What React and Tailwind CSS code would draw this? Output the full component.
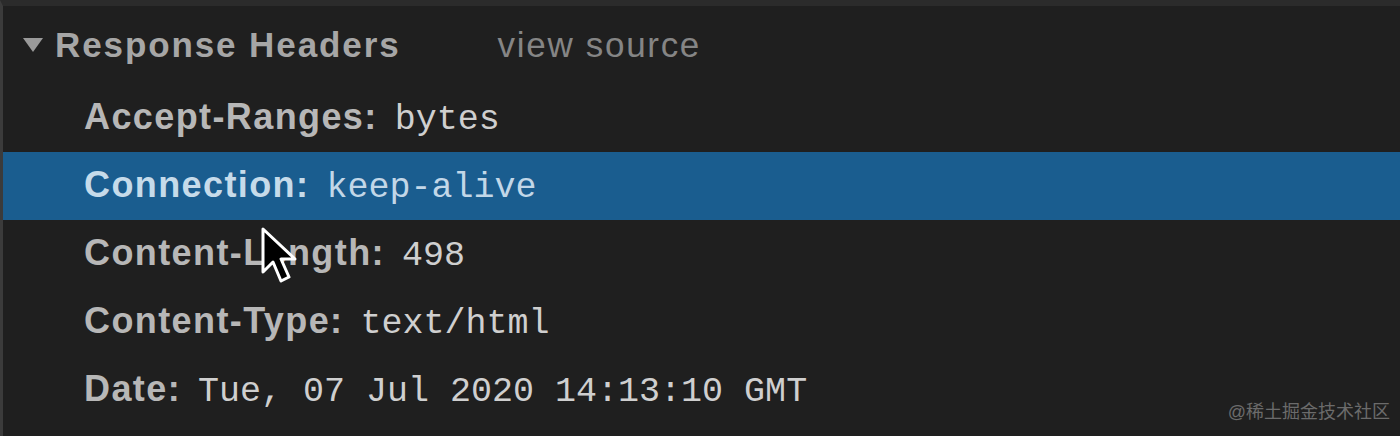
import React from 'react';

const headers = [
  { name: 'Accept-Ranges:', value: 'bytes' },
  { name: 'Connection:', value: 'keep-alive', selected: true },
  { name: 'Content-Length:', value: '498' },
  { name: 'Content-Type:', value: 'text/html' },
  { name: 'Date:', value: 'Tue, 07 Jul 2020 14:13:10 GMT' },
];

function Cursor() {
  return (
    <svg
      className="absolute left-[255px] top-[220px]"
      width="40"
      height="62"
      viewBox="0 0 40 62"
    >
      <path
        d="M5 3 L5 46 L15 36 L23 55 L31 51 L23 33 L37 33 Z"
        fill="#000"
        stroke="#fff"
        strokeWidth="3"
        strokeLinejoin="round"
      />
    </svg>
  );
}

export default function App() {
  return (
    <div className="relative w-[1400px] h-[436px] overflow-hidden bg-[#1f1f1f] border-t-[6px] border-t-[#2b2b2b] border-l-[3px] border-l-[#3b3b3b] font-['Liberation_Sans',sans-serif]">
      {/* section title */}
      <div className="h-[78px] flex items-center">
        <span className="ml-[19px] w-[22px] text-[#9a9a9a]">
          <svg width="22" height="16" viewBox="0 0 22 16">
            <path d="M1 1 L21 1 L11 15 Z" fill="currentColor" />
          </svg>
        </span>
        <span className="ml-[11px] text-[35px] font-bold text-[#a6a6a6] tracking-[1.9px]">Response Headers</span>
        <span className="ml-[97px] text-[35px] text-[#858585] tracking-[1.7px]">view source</span>
      </div>

      {headers.map((h) => (
        <div
          key={h.name}
          className={`h-[68px] leading-[66px] flex items-baseline pl-[81px] ${h.selected ? 'bg-[#1a5d8f]' : ''}`}
        >
          <span className={`text-[36px] font-bold tracking-[1.4px] ${h.selected ? 'text-[#c6dbea]' : 'text-[#b7b7b7]'}`}>
            {h.name}
          </span>
          <span
            className={`ml-[17px] text-[35px] font-['Liberation_Mono',monospace] ${h.selected ? 'text-[#c2d7e8]' : 'text-[#cfcfcf]'}`}
          >
            {h.value}
          </span>
        </div>
      ))}

      <Cursor />

      <div className="absolute right-[10px] bottom-[10px] text-[18px] text-[#6b6b6b] font-['Liberation_Sans','Noto_Sans_CJK_SC',sans-serif]">
        @稀土掘金技术社区
      </div>
    </div>
  );
}
